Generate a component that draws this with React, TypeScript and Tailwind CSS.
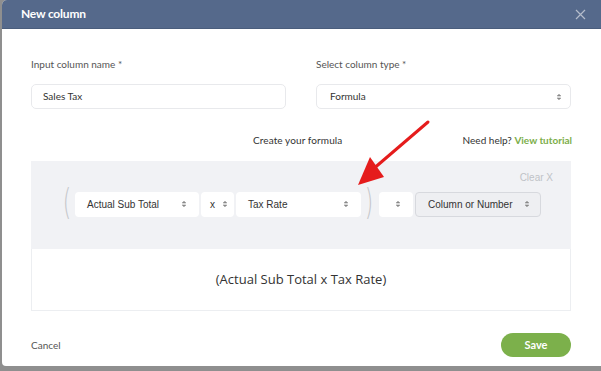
import React from 'react';

const Chevrons: React.FC = () => (
  <svg width="6" height="10" viewBox="0 0 6 10" className="shrink-0">
    <path d="M1.2 4 L3 2.2 L4.8 4 Z" fill="#888" stroke="#888" strokeWidth="0.6" />
    <path d="M1.2 6 L3 7.8 L4.8 6 Z" fill="#888" stroke="#888" strokeWidth="0.6" />
  </svg>
);

const FakeSelect: React.FC<{ label: string; className: string }> = ({ label, className }) => (
  <div className={`h-[25px] rounded-[4px] flex items-center justify-between pl-3 pr-3 text-[10px] text-[#333] ${className}`} style={{ fontFamily: '"Liberation Sans", Arial, sans-serif' }}>
    <span>{label}</span>
    <Chevrons />
  </div>
);

const Paren: React.FC<{ ch: string }> = ({ ch }) => (
  <span className="text-[#c4c6ca] text-[36px] leading-none w-[16px] text-center -mt-[4px]" style={{ fontFamily: '"DejaVu Sans", sans-serif', fontWeight: 200, transform: 'scaleX(0.6)' }}>{ch}</span>
);

const App: React.FC = () => {
  return (
    <div className="w-[601px] h-[371px] bg-[#8f8f8f] overflow-hidden relative" style={{ fontFamily: 'Lato, "Open Sans", sans-serif' }}>
      <div className="ml-[2px] w-[610px] h-[366px] bg-white rounded-tl-[5px] rounded-bl-[4px] overflow-hidden flex flex-col">
        <div className="h-[29px] bg-[#55698b] border-b border-[#4a5d7c] flex items-center justify-between pl-[19px] pr-[17px] shrink-0">
          <span className="text-white text-[12px] font-bold tracking-[-0.2px]">New column</span>
          <svg width="11" height="11" viewBox="0 0 11 11" className="mr-[9px]">
            <path d="M1 1 L10 10 M10 1 L1 10" stroke="#b4bccb" strokeWidth="1.2" />
          </svg>
        </div>

        <div className="pl-[29px] w-[570px] flex flex-col">
          <div className="flex gap-[30px] mt-[28px]">
            <div className="w-[255px]">
              <div className="text-[10px] text-[#555] h-[14px] leading-[14px]">Input column name *</div>
              <div className="mt-[13px] h-[25px] border border-[#e8e9ec] rounded-[5px] flex items-center pl-[11px] text-[10px] text-[#333]">Sales Tax</div>
            </div>
            <div className="w-[255px]">
              <div className="text-[10px] text-[#555] h-[14px] leading-[14px]">Select column type *</div>
              <div className="mt-[13px] h-[25px] border border-[#e8e9ec] rounded-[5px] flex items-center justify-between pl-[13px] pr-[8px] text-[10px] text-[#333]">
                <span>Formula</span>
                <Chevrons />
              </div>
            </div>
          </div>

          <div className="relative h-[20px] mt-[21px] text-[10px]">
            <div className="absolute left-[222px] top-[3px] text-[#333] tracking-[0.1px]">Create your formula</div>
            <div className="absolute right-0 top-[3px] text-[#333]">
              Need help? <span className="text-[#7cae4a] font-bold">View tutorial</span>
            </div>
          </div>

          <div className="mt-[11px] w-[540px] bg-[#f1f2f5] h-[88px] flex flex-col">
            <div className="flex justify-end pr-[18px] pt-[9px] h-[27px]">
              <span className="text-[10px] text-[#c0c2c7]" style={{ fontFamily: '"Liberation Sans", Arial, sans-serif' }}>Clear X</span>
            </div>
            <div className="flex items-center pl-[28px]">
              <Paren ch="(" />
              <FakeSelect label="Actual Sub Total" className="w-[124px] bg-white" />
              <FakeSelect label="x" className="w-[33px] ml-[2px] bg-white pl-[9px] pr-[6px]" />
              <FakeSelect label="Tax Rate" className="w-[125px] ml-[2px] bg-white" />
              <Paren ch=")" />
              <FakeSelect label="" className="w-[34px] ml-[2px] bg-white" />
              <FakeSelect label="Column or Number" className="w-[126px] ml-[2px] bg-[#eeeff2] border border-[#d7d9de] pr-[10px]" />
            </div>
          </div>

          <div className="w-[540px] h-[62px] border border-[#eceef1] border-t-0 flex items-center justify-center">
            <span className="text-[13px] text-[#333]" style={{ fontFamily: '"Open Sans", sans-serif' }}>(Actual Sub Total x Tax Rate)</span>
          </div>

          <div className="mt-[22px] flex items-center justify-between w-[540px]">
            <span className="text-[10px] text-[#555]">Cancel</span>
            <div className="w-[70px] h-[24px] rounded-full bg-[#7cb04b] flex items-center justify-center text-white text-[11px] font-bold">Save</div>
          </div>
        </div>
      </div>

      <svg className="absolute left-0 top-0 pointer-events-none" width="601" height="371" viewBox="0 0 601 371">
        <path d="M428 122 L372 170" stroke="#e51c1c" strokeWidth="3" strokeLinecap="round" />
        <path d="M358 185 L370 157 L384 177 Z" fill="#e51c1c" />
      </svg>
    </div>
  );
};

export default App;
